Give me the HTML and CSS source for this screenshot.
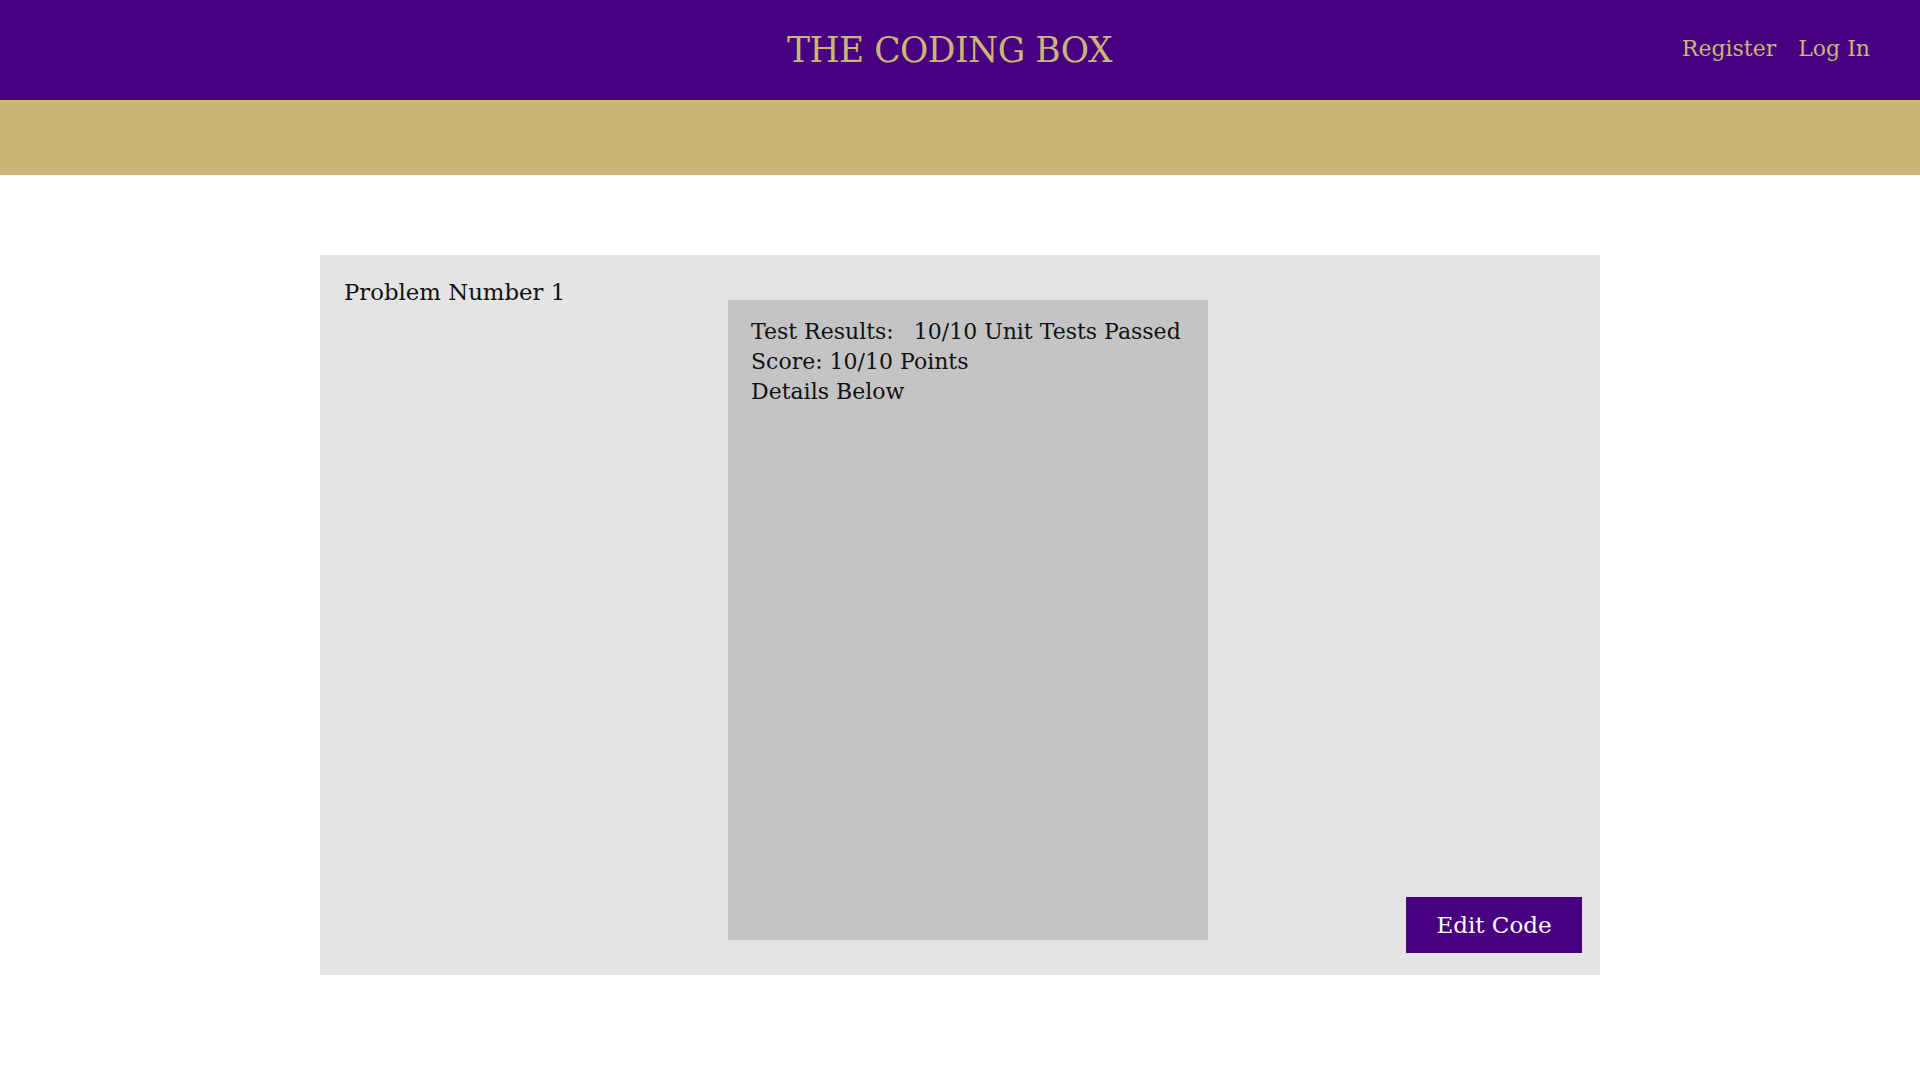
FILE: index.html
```html
<!DOCTYPE html>
<html>
<head>
<meta charset="utf-8">
<title>The Coding Box</title>
<link rel="stylesheet" href="styles.css">
</head>
<body>
<header class="topbar">
  <div class="brand">THE CODING BOX</div>
  <nav class="nav">
    <a class="nav-link" href="#">Register</a>
    <a class="nav-link" href="#">Log In</a>
  </nav>
</header>
<div class="band"></div>
<main class="main">
  <section class="panel">
    <div class="col-left">
      <h2 class="problem-title">Problem Number 1</h2>
    </div>
    <div class="results">
      <div class="line"><span class="label">Test Results:</span>10/10 Unit Tests Passed</div>
      <div class="line">Score: 10/10 Points</div>
      <div class="line">Details Below</div>
    </div>
    <div class="col-right">
      <button class="edit-btn">Edit Code</button>
    </div>
  </section>
</main>
</body>
</html>
```
FILE: styles.css
```css
* { box-sizing: border-box; }
body {
  margin: 0;
  font-family: "DejaVu Serif", "Liberation Serif", serif;
  background: #ffffff;
  color: #111;
}
.topbar {
  height: 100px;
  background: #470080;
  display: grid;
  grid-template-columns: 1fr auto 1fr;
  align-items: center;
}
.brand {
  grid-column: 2;
  color: #cbb677;
  font-size: 34.5px;
  letter-spacing: -0.5px;
  margin-left: -21px;
}
.nav {
  grid-column: 3;
  justify-self: end;
  display: flex;
  gap: 22px;
  margin: -4px 50px 0 0;
}
.nav-link {
  color: #cbb677;
  text-decoration: none;
  font-size: 22px;
}
.band {
  height: 75px;
  background: #cbb677;
}
.main {
  padding-top: 80px;
  display: flex;
  justify-content: center;
}
.panel {
  width: 1280px;
  height: 720px;
  background: #e4e4e4;
  display: grid;
  grid-template-columns: 408px 480px 1fr;
}
.col-left {
  padding: 22px 0 0 24px;
}
.problem-title {
  margin: 0;
  font-weight: normal;
  font-size: 22.8px;
  line-height: 30px;
}
.results {
  margin-top: 45px;
  height: 640px;
  background: #c4c4c4;
  padding: 17px 0 0 23px;
  font-size: 22px;
  line-height: 30px;
}
.label { margin-right: 20px; }
.col-right {
  display: flex;
  justify-content: flex-end;
  align-items: flex-end;
  padding: 0 18px 22px 0;
}
.edit-btn {
  width: 176px;
  height: 56px;
  background: #470080;
  color: #ffffff;
  border: none;
  font-family: "DejaVu Serif", "Liberation Serif", serif;
  font-size: 23px;
  padding: 0;
}
```
